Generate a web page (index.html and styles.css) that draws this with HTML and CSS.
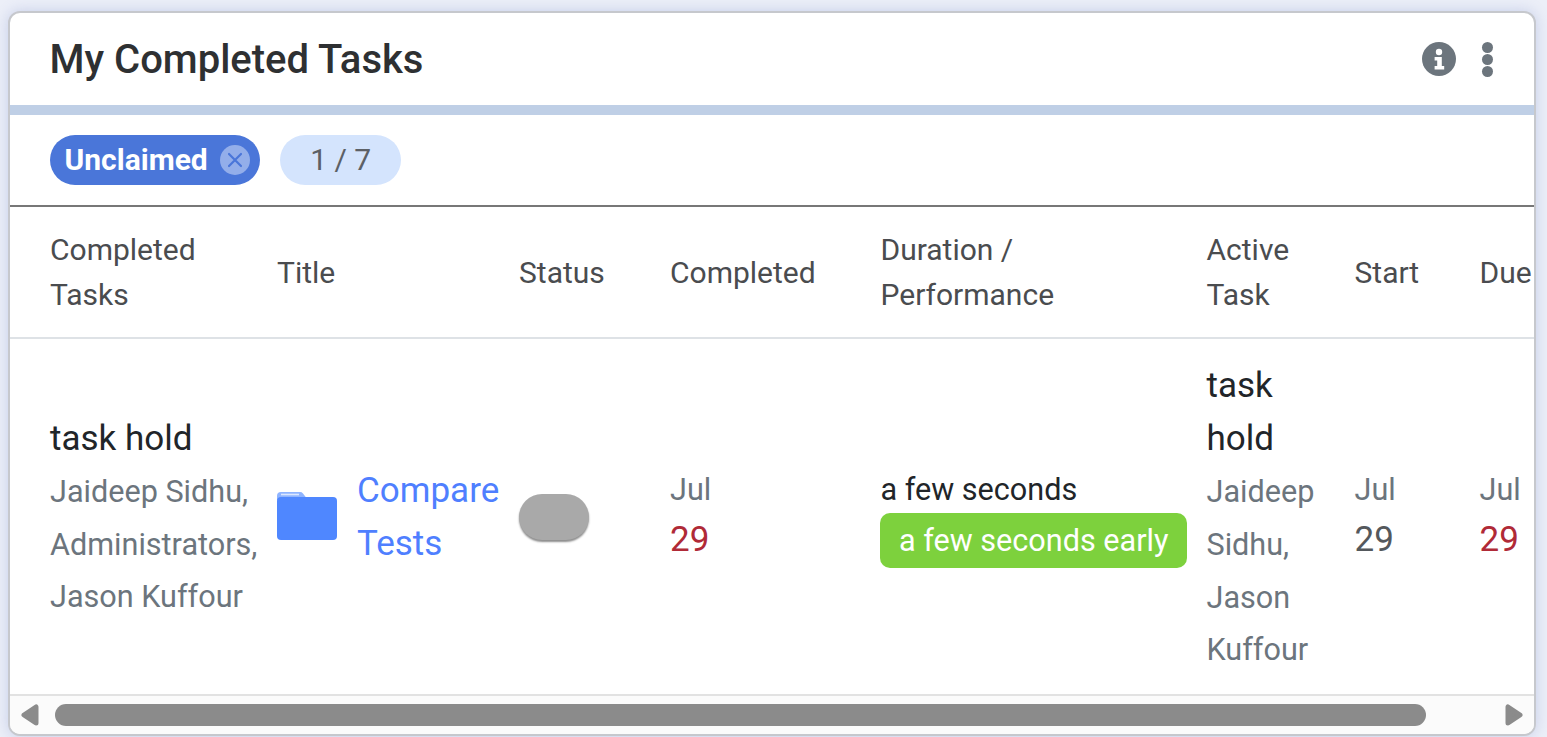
FILE: index.html
```html
<!DOCTYPE html>
<html lang="en">
<head>
<meta charset="utf-8">
<title>My Completed Tasks</title>
<link rel="stylesheet" href="styles.css">
</head>
<body>
<section class="card">
  <header class="card-head">
    <h1 class="card-title">My Completed Tasks</h1>
    <div class="card-actions">
      <svg class="icon-info" viewBox="0 0 34 34" aria-hidden="true">
        <circle cx="17" cy="17" r="17" fill="#6c757d"/>
        <circle cx="17" cy="10" r="3.2" fill="#fff"/>
        <path d="M12.6 15h7.2v9h2.4v3.4h-9.6V24h2.6v-5.6h-2.6z" fill="#fff"/>
      </svg>
      <div class="icon-more"><span></span><span></span><span></span></div>
    </div>
  </header>
  <div class="filters">
    <span class="pill pill-active"><span class="pill-label">Unclaimed</span>
      <span class="pill-close">
        <svg viewBox="0 0 30 30" aria-hidden="true"><path d="M9 9l12 12M21 9L9 21" stroke="#4a76d9" stroke-width="2.2" stroke-linecap="round" fill="none"/></svg>
      </span>
    </span>
    <span class="pill pill-count"><span class="pill-label">1 / 7</span></span>
  </div>
  <div class="table-wrap">
    <table class="tasks">
      <colgroup>
        <col class="c1"><col class="c2"><col class="c3"><col class="c4"><col class="c5"><col class="c6"><col class="c7"><col class="c8">
      </colgroup>
      <thead>
        <tr>
          <th class="first">Completed Tasks</th>
          <th class="single">Title</th>
          <th class="single">Status</th>
          <th class="single">Completed</th>
          <th>Duration / Performance</th>
          <th>Active Task</th>
          <th class="single">Start</th>
          <th class="single">Due</th>
        </tr>
      </thead>
      <tbody>
        <tr>
          <td class="first">
            <div class="task-name">task hold</div>
            <div class="task-people">Jaideep Sidhu, Administrators, Jason Kuffour</div>
          </td>
          <td>
            <div class="title-cell">
              <svg class="folder" viewBox="0 0 60 48" aria-hidden="true">
                <path d="M0 4a4 4 0 0 1 4-4h19a4 4 0 0 1 3 1.4L31 8H0z" fill="#8fb4ff"/>
                <path d="M4 2.5h18" stroke="#dbe7ff" stroke-width="1.6" fill="none"/>
                <rect x="0" y="5" width="60" height="43" rx="4" fill="#4f87ff"/>
              </svg>
              <a class="title-link" href="#">Compare Tests</a>
            </div>
          </td>
          <td><span class="status-toggle"></span></td>
          <td><div class="date"><span class="month">Jul</span><span class="day overdue">29</span></div></td>
          <td>
            <div class="duration">a few seconds</div>
            <span class="perf">a few seconds early</span>
          </td>
          <td>
            <div class="task-name">task hold</div>
            <div class="task-people">Jaideep Sidhu, Jason Kuffour</div>
          </td>
          <td><div class="date"><span class="month">Jul</span><span class="day">29</span></div></td>
          <td><div class="date"><span class="month">Jul</span><span class="day overdue">29</span></div></td>
        </tr>
      </tbody>
    </table>
  </div>
  <div class="scrollbar">
    <svg class="arrow" viewBox="0 0 20 24" aria-hidden="true"><path d="M16 4v16L4 12z" fill="#8b8b8b" stroke="#8b8b8b" stroke-width="5" stroke-linejoin="round"/></svg>
    <div class="track"><div class="thumb"></div></div>
    <svg class="arrow" viewBox="0 0 20 24" aria-hidden="true"><path d="M4 4v16l12-8z" fill="#8b8b8b" stroke="#8b8b8b" stroke-width="5" stroke-linejoin="round"/></svg>
  </div>
</section>
</body>
</html>
```
FILE: styles.css
```css
* { box-sizing: border-box; }
html, body { height: 100%; }
body {
  margin: 0;
  padding: 11px 11px 1px 8px;
  background: #eceff8;
  font-family: Roboto, "Liberation Sans", sans-serif;
  overflow: hidden;
}
.card {
  width: 1528px;
  height: 725px;
  background: #fff;
  border: 2px solid #c6c8cd;
  border-radius: 12px;
  box-shadow: 0 0 14px rgba(110, 130, 200, 0.3);
  display: flex;
  flex-direction: column;
  overflow: hidden;
}
.card-head {
  height: 92px;
  flex: none;
  padding: 0 41px 0 39.5px;
  display: flex;
  align-items: center;
  justify-content: space-between;
}
.card-title {
  margin: 0;
  font-size: 40px;
  font-weight: 500;
  color: #2e3032;
}
.card-actions { display: flex; align-items: center; gap: 26px; }
.icon-info { width: 34px; height: 34px; display: block; }
.icon-more { display: flex; flex-direction: column; gap: 1px; width: 11px; }
.icon-more span { width: 11px; height: 11px; border-radius: 50%; background: #6c757d; }
.filters {
  flex: none;
  height: 102px;
  border-top: 10px solid #bfcfe6;
  border-bottom: 2px solid #777;
  padding: 20px 40px 0;
  display: flex;
  gap: 20px;
  align-items: flex-start;
}
.pill {
  height: 50px;
  border-radius: 25px;
  display: inline-flex;
  align-items: center;
  font-size: 30px;
}
.pill-label { display: block; padding-bottom: 2px; }
.pill-active {
  background: #4a76d9;
  color: #fff;
  font-weight: 700;
  padding: 0 10px 0 14.5px;
  gap: 12.5px;
}
.pill-close {
  width: 30px;
  height: 30px;
  border-radius: 50%;
  background: #93aeea;
  display: block;
}
.pill-close svg { display: block; width: 30px; height: 30px; }
.pill-count {
  background: #d4e4fd;
  color: #5c6066;
  padding: 0 30px;
}
.table-wrap { flex: 1 1 auto; overflow: hidden; }
.tasks {
  table-layout: fixed;
  border-collapse: collapse;
  width: 1559.5px;
}
.c1 { width: 267px; }
.c2 { width: 242px; }
.c3 { width: 151px; }
.c4 { width: 210.5px; }
.c5 { width: 326px; }
.c6 { width: 148px; }
.c7 { width: 125px; }
.c8 { width: 90px; }
.tasks th {
  height: 131px;
  padding: 0 30px 1px 0;
  text-align: left;
  vertical-align: middle;
  font-size: 30px;
  font-weight: 400;
  line-height: 45px;
  color: #4a4c4f;
  border-bottom: 2px solid #dee2e6;
}
.tasks th.single { padding-bottom: 0; padding-top: 1px; }
.tasks th.first, .tasks td.first { padding-left: 40px; }
.tasks td {
  height: 356px;
  padding: 2px 10px 0 0;
  vertical-align: middle;
  color: #212529;
  font-size: 30.6px;
  line-height: 53px;
}
.task-name { font-size: 35px; color: #212529; }
.task-people { font-size: 30.6px; color: #6c757d; line-height: 52.8px; margin-top: 1px; margin-bottom: -1px; }
.title-cell { display: flex; align-items: center; gap: 20px; }
.folder { width: 60px; height: 48px; flex: none; margin-bottom: 4px; }
.title-link { color: #4f7fff; font-size: 35px; text-decoration: none; margin-bottom: 2px; }
.status-toggle {
  display: block;
  width: 70px;
  height: 46px;
  margin-bottom: 2px;
  border-radius: 23px;
  background: #a9a9a9;
  box-shadow: 0 2px 2px rgba(0, 0, 0, 0.45);
}
.date { display: flex; flex-direction: column; }
.month { font-size: 30.6px; color: #6c757d; line-height: 44px; }
.day { font-size: 35px; color: #54585c; line-height: 56px; }
.day.overdue { color: #b02a37; }
.duration { font-size: 30.6px; line-height: 46px; }
.perf {
  display: inline-block;
  background: #7dd13d;
  color: #fff;
  font-size: 30.6px;
  line-height: 55px;
  border-radius: 10px;
  padding: 0 19px;
  margin-left: -0.5px;
  white-space: nowrap;
}
.scrollbar {
  flex: none;
  height: 40px;
  background: #fbfbfb;
  border-top: 2px solid #e2e2e2;
  display: flex;
  align-items: center;
  padding: 0 10px;
}
.arrow { width: 20px; height: 24px; flex: none; display: block; }
.track { flex: 1 1 auto; padding: 0 78px 0 15px; }
.thumb { height: 22px; border-radius: 11px; background: #8b8b8b; }
```
